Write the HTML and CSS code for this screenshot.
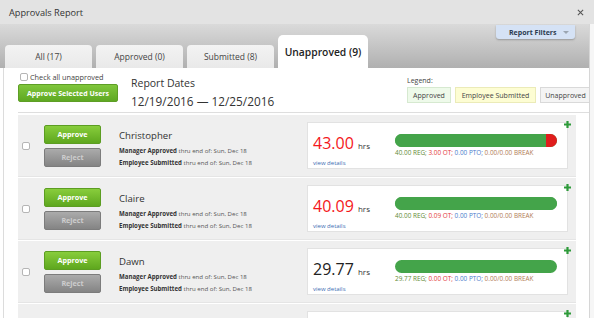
FILE: index.html
```html
<!DOCTYPE html>
<html lang="en">
<head>
  <meta charset="UTF-8">
  <meta name="viewport" content="width=device-width, initial-scale=1.0">
  <title>Approvals Report</title>
  <link rel="stylesheet" href="styles.css">
</head>
<body>
  <div class="modal">
    <div class="titlebar">
      <span class="title">Approvals Report</span>
      <svg class="close" viewBox="0 0 8 8"><path d="M1 1L7 7M7 1L1 7" stroke="#555" stroke-width="1.2" fill="none"/></svg>
    </div>
    <div class="body">
      <div class="main">
        <div class="tabbar">
          <div class="tab">All (17)</div>
          <div class="tab">Approved (0)</div>
          <div class="tab">Submitted (8)</div>
          <div class="tab active">Unapproved (9)</div>
          <div class="filters">Report Filters <span class="caret"></span></div>
        </div>

        <div class="content">
          <div class="top">
            <div class="select">
              <label class="checkall"><span class="box"></span>Check all unapproved</label>
              <button class="approve-all">Approve Selected Users</button>
            </div>
            <div class="dates">
              <div class="dates-label">Report Dates</div>
              <div class="dates-range">12/19/2016 — 12/25/2016</div>
            </div>
            <div class="legend">
              <div class="legend-label">Legend:</div>
              <div class="legend-items">
                <span class="key key-approved">Approved</span>
                <span class="key key-submitted">Employee Submitted</span>
                <span class="key key-unapproved">Unapproved</span>
              </div>
            </div>
          </div>

          <div class="list">
            <div class="row">
              <span class="box"></span>
              <div class="actions">
                <button class="btn approve">Approve</button>
                <button class="btn reject">Reject</button>
              </div>
              <div class="info">
                <div class="name">Christopher</div>
                <div class="line"><b>Manager Approved</b> thru end of: Sun, Dec 18</div>
                <div class="line"><b>Employee Submitted</b> thru end of: Sun, Dec 18</div>
              </div>
              <div class="card">
                <div class="hours">
                  <div class="hours-value over">43.00 <span class="hrs">hrs</span></div>
                  <div class="view">view details</div>
                </div>
                <div class="bar-wrap">
                  <div class="bar"><span class="reg" style="width: 93%"></span><span class="ot"></span></div>
                  <div class="bar-text"><span class="t-reg">40.00 REG;</span> <span class="t-ot">3.00 OT;</span> <span class="t-pto">0.00 PTO;</span> <span class="t-brk">0.00/0.00 BREAK</span></div>
                </div>
              </div>
              <svg class="plus" viewBox="0 0 7 7"><path d="M3.5 0V7M0 3.5H7" stroke="#2e9a3a" stroke-width="2.2"/></svg>
            </div>

            <div class="row">
              <span class="box"></span>
              <div class="actions">
                <button class="btn approve">Approve</button>
                <button class="btn reject">Reject</button>
              </div>
              <div class="info">
                <div class="name">Claire</div>
                <div class="line"><b>Manager Approved</b> thru end of: Sun, Dec 18</div>
                <div class="line"><b>Employee Submitted</b> thru end of: Sun, Dec 18</div>
              </div>
              <div class="card">
                <div class="hours">
                  <div class="hours-value over">40.09 <span class="hrs">hrs</span></div>
                  <div class="view">view details</div>
                </div>
                <div class="bar-wrap">
                  <div class="bar"><span class="reg" style="width: 99.8%"></span><span class="ot"></span></div>
                  <div class="bar-text"><span class="t-reg">40.00 REG;</span> <span class="t-ot">0.09 OT;</span> <span class="t-pto">0.00 PTO;</span> <span class="t-brk">0.00/0.00 BREAK</span></div>
                </div>
              </div>
              <svg class="plus" viewBox="0 0 7 7"><path d="M3.5 0V7M0 3.5H7" stroke="#2e9a3a" stroke-width="2.2"/></svg>
            </div>

            <div class="row">
              <span class="box"></span>
              <div class="actions">
                <button class="btn approve">Approve</button>
                <button class="btn reject">Reject</button>
              </div>
              <div class="info">
                <div class="name">Dawn</div>
                <div class="line"><b>Manager Approved</b> thru end of: Sun, Dec 18</div>
                <div class="line"><b>Employee Submitted</b> thru end of: Sun, Dec 18</div>
              </div>
              <div class="card">
                <div class="hours">
                  <div class="hours-value">29.77 <span class="hrs">hrs</span></div>
                  <div class="view">view details</div>
                </div>
                <div class="bar-wrap">
                  <div class="bar"><span class="reg" style="width: 100%"></span></div>
                  <div class="bar-text"><span class="t-reg">29.77 REG;</span> <span class="t-ot">0.00 OT;</span> <span class="t-pto">0.00 PTO;</span> <span class="t-brk">0.00/0.00 BREAK</span></div>
                </div>
              </div>
              <svg class="plus" viewBox="0 0 7 7"><path d="M3.5 0V7M0 3.5H7" stroke="#2e9a3a" stroke-width="2.2"/></svg>
            </div>

            <div class="row">
              <span class="box"></span>
              <div class="actions">
                <button class="btn approve"></button>
              </div>
              <div class="info"></div>
              <div class="card"></div>
              <svg class="plus" viewBox="0 0 7 7"><path d="M3.5 0V7M0 3.5H7" stroke="#2e9a3a" stroke-width="2.2"/></svg>
            </div>
          </div>
        </div>
      </div>
      <div class="scroll"></div>
    </div>
  </div>
</body>
</html>
```

FILE: styles.css
```css
* {
  box-sizing: border-box;
}
body {
  margin: 0;
  font-family: "Open Sans", "Liberation Sans", sans-serif;
  color: #333;
  background: #fff;
}
button {
  font-family: inherit;
  cursor: pointer;
}
.modal {
  width: 594px;
  height: 318px;
  overflow: hidden;
  display: flex;
  flex-direction: column;
}
.titlebar {
  flex: none;
  height: 24px;
  background: #e3e3e3;
  display: flex;
  align-items: center;
  justify-content: space-between;
  padding: 0 10px 0 9px;
}
.title {
  font-size: 9.2px;
  color: #333;
}
.close {
  width: 7px;
  height: 7px;
}
.body {
  flex: 1;
  min-height: 0;
  display: flex;
}
.main {
  width: 589px;
  display: flex;
  flex-direction: column;
}
.scroll {
  flex: 1;
  background: #f6f6f6;
  border-left: 1px solid #d6d6d6;
}

/* tabs */
.tabbar {
  position: relative;
  flex: none;
  height: 44px;
  background: linear-gradient(#dadada, #b0b0b0);
  display: flex;
  align-items: flex-end;
  gap: 4px;
  padding-left: 5px;
}
.tab {
  width: 87px;
  height: 23px;
  background: linear-gradient(#f3f3f3, #e9e9e9);
  border-radius: 4px 4px 0 0;
  font-size: 8.5px;
  color: #444;
  display: flex;
  align-items: center;
  justify-content: center;
}
.tab.active {
  width: 90px;
  height: 33px;
  background: #fff;
  border-radius: 5px 5px 0 0;
  font-size: 10.3px;
  font-weight: 600;
  color: #222;
}
.filters {
  position: absolute;
  top: 1px;
  right: 14px;
  width: 79px;
  height: 14px;
  background: #d5e2f5;
  border-radius: 0 0 3px 3px;
  box-shadow: 0 1px 2px rgba(0, 0, 0, 0.25);
  font-size: 7px;
  font-weight: 700;
  color: #2c3b50;
  display: flex;
  align-items: center;
  padding-left: 13px;
}
.caret {
  border-left: 3px solid transparent;
  border-right: 3px solid transparent;
  border-top: 3px solid #9ba5b1;
  margin-left: 6px;
}

/* content */
.content {
  flex: 1;
  min-height: 0;
  margin-left: 3px;
  border-left: 1px solid #dcdcdc;
  background: #fff;
}
.top {
  height: 44px;
  display: flex;
  padding: 5px 0 0 14px;
}
.select {
  width: 100px;
}
.box {
  flex: none;
  display: inline-block;
  width: 8px;
  height: 8px;
  border: 1px solid #b5b5b5;
  border-radius: 2px;
  background: #fff;
}
.checkall {
  display: flex;
  align-items: center;
  height: 8px;
  gap: 2px;
  padding-left: 2px;
  font-size: 7.3px;
  color: #444;
}
.approve-all {
  display: block;
  width: 100px;
  height: 18px;
  margin-top: 3px;
  padding: 0;
  border: 1px solid #5e9e26;
  border-radius: 2px;
  background: linear-gradient(#80c63c, #5ea822);
  color: #fff;
  font-size: 7px;
  font-weight: 700;
}
.dates {
  margin-left: 13px;
}
.dates-label {
  margin-top: 3px;
  font-size: 10.5px;
  line-height: 14px;
  color: #333;
}
.dates-range {
  margin-top: 3px;
  font-size: 11.8px;
  line-height: 16px;
  color: #333;
}
.legend {
  margin-left: auto;
  margin-right: -2px;
}
.legend-label {
  margin-top: 3px;
  font-size: 7px;
  line-height: 9px;
  color: #444;
}
.legend-items {
  display: flex;
  gap: 4px;
  margin-top: 2px;
}
.key {
  height: 16px;
  border: 1px solid;
  font-size: 7px;
  color: #444;
  display: flex;
  align-items: center;
  justify-content: center;
}
.key-approved {
  width: 44px;
  background: #eefaea;
  border-color: #d6e9d0;
}
.key-submitted {
  width: 81px;
  background: #fdfdd3;
  border-color: #ebebb8;
}
.key-unapproved {
  width: 51px;
  background: #f4f4f4;
  border-color: #d9d9d9;
}

/* rows */
.list {
  margin-left: 14px;
  border-top: 1px solid #dedede;
  padding-top: 2px;
}
.row {
  position: relative;
  height: 62px;
  margin: 0 13px 1px 0;
  padding-left: 4px;
  background: #efefef;
  border-bottom: 1px solid #e5e5e5;
  display: flex;
  align-items: center;
}
.row .box {
  margin-right: 14px;
}
.actions {
  width: 57px;
  display: flex;
  flex-direction: column;
  gap: 4px;
}
.btn {
  height: 19px;
  padding: 0;
  border-radius: 2px;
  font-size: 7.2px;
  font-weight: 700;
}
.approve {
  border: 1px solid #5c9d22;
  background: linear-gradient(#88cd3c, #5ea71e);
  color: #fff;
}
.reject {
  border: 1px solid #7c7c7c;
  background: linear-gradient(#ababab, #848484);
  color: #cdcdcd;
}
.info {
  flex: 1;
  margin-left: 18px;
  padding-top: 6px;
}
.name {
  font-size: 9.6px;
  line-height: 14px;
  color: #333;
  margin-bottom: 2px;
}
.line {
  font-size: 6.1px;
  line-height: 12px;
  color: #555;
  white-space: nowrap;
}
.line b {
  color: #333;
}
.card {
  width: 261px;
  height: 47px;
  margin-right: 8px;
  background: #fff;
  border: 1px solid #e2e2e2;
  display: flex;
  align-items: flex-start;
  padding: 11px 0 0 5px;
}
.hours {
  width: 82px;
}
.hours-value {
  font-size: 16px;
  line-height: 18px;
  color: #222;
  white-space: nowrap;
}
.hours-value.over {
  color: #f4171b;
}
.hrs {
  font-size: 8px;
  color: #333;
}
.view {
  margin-top: 4px;
  font-size: 6px;
  line-height: 8px;
  color: #3d6db3;
}
.bar-wrap {
  width: 162px;
}
.bar {
  height: 13px;
  border-radius: 7px;
  overflow: hidden;
  display: flex;
  background: #44a44a;
}
.reg {
  background: #44a44a;
}
.ot {
  flex: 1;
  background: #e01d1d;
}
.bar-text {
  margin-top: 2px;
  font-size: 6.4px;
  line-height: 8px;
  white-space: nowrap;
}
.t-reg {
  color: #5f8a36;
}
.t-ot {
  color: #e33b3b;
}
.t-pto {
  color: #4a7ccc;
}
.t-brk {
  color: #b17b55;
}
.plus {
  position: absolute;
  top: 6px;
  right: 5px;
  width: 7px;
  height: 7px;
}
```
